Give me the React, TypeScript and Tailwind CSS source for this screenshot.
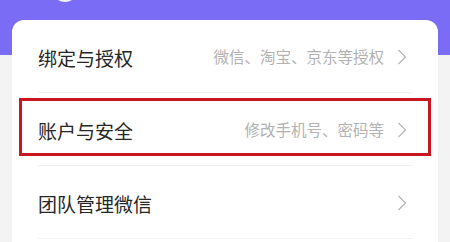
import type { FC } from "react";

type RowProps = {
  title: string;
  hint?: string;
  highlighted?: boolean;
};

const Chevron: FC = () => (
  <svg width="10" height="16" viewBox="0 0 10 16" fill="none" className="mr-[5px] shrink-0">
    <path d="M1.5 1 L8.5 8 L1.5 15" stroke="#b4b4b4" strokeWidth="1.2" strokeLinejoin="miter" />
  </svg>
);

const Row: FC<RowProps> = ({ title, hint, highlighted }) => (
  <div className="relative">
    <div className="flex items-center justify-between h-[73px] pt-[2px] border-b border-[#f1f1f1]">
      <span className="text-[19px] text-[#262626] leading-none">{title}</span>
      <div className="flex items-center gap-[13px]">
        {hint && (
          <span className="text-[15.5px] text-[#b2b2b2] leading-none">{hint}</span>
        )}
        <Chevron />
      </div>
    </div>
    {highlighted && (
      <div className="absolute left-[-19px] right-[-19px] top-[5px] h-[58px] border-[3px] border-[#c8171e]" />
    )}
  </div>
);

export default function App() {
  return (
    <div
      className="relative h-[242px] w-[450px] overflow-hidden bg-[linear-gradient(to_bottom,#7a6cf4_55px,#f3f3f3_55px)] pt-[20px] px-[12px]"
      style={{ fontFamily: '"Noto Sans CJK SC", "Noto Sans", sans-serif' }}
    >
      <div className="absolute left-[52px] top-[-24px] w-[26px] h-[26px] rounded-full bg-white/90" />
      <div className="bg-white rounded-t-[12px] px-[26px] pb-[40px]">
        <Row title="绑定与授权" hint="微信、淘宝、京东等授权" />
        <Row title="账户与安全" hint="修改手机号、密码等" highlighted />
        <Row title="团队管理微信" />
      </div>
    </div>
  );
}
